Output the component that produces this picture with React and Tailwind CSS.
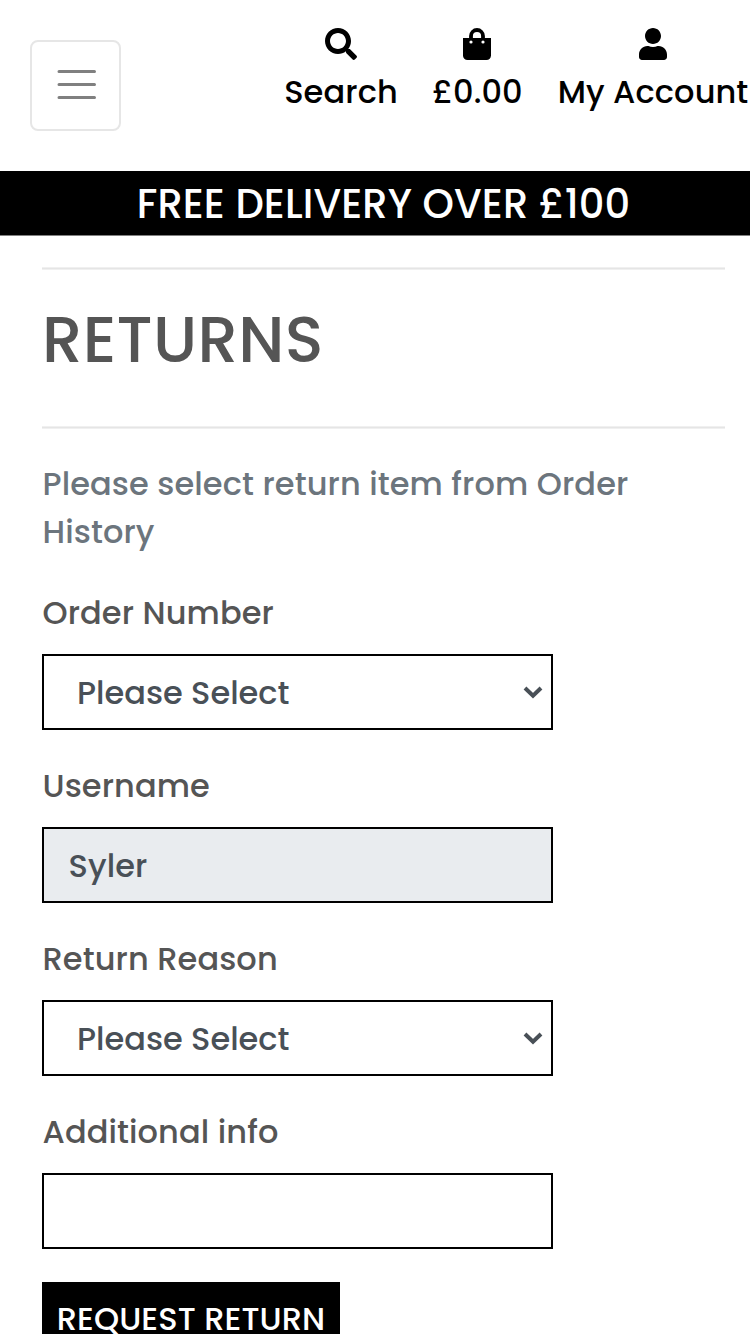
import { FaSearch, FaUser } from "react-icons/fa";

function BagIcon() {
  return (
    <svg className="mr-px h-8 w-7" viewBox="0 0 28 32" aria-hidden="true">
      <path d="M8 11V8a6 6 0 0 1 12 0v3" fill="none" stroke="#000" strokeWidth="3.8" />
      <path d="M0 10h28v17.500a4.500 4.500 0 0 1-4.500 4.500h-19A4.500 4.500 0 0 1 0 27.500z" />
      <circle cx="8" cy="14" r="1.6" fill="#fff" />
      <circle cx="20" cy="14" r="1.6" fill="#fff" />
    </svg>
  );
}

function Chevron() {
  return (
    <svg className="h-[13px] w-5 shrink-0" viewBox="0 0 20 13" fill="none" stroke="#495057" strokeWidth="4" aria-hidden="true">
      <path d="M2 2l8 7.700L18 2" />
    </svg>
  );
}

function NavItem({ icon, label, className }) {
  return (
    <a className={`flex flex-col items-center whitespace-nowrap ${className}`}>
      <span className="flex h-8 items-center">{icon}</span>
      <span className="mt-2 leading-[48px]">{label}</span>
    </a>
  );
}

function Field({ label, children }) {
  return (
    <div className="mb-8 h-[141px]">
      <label className="block h-12 pl-[0.5px] leading-[48px]">{label}</label>
      {children}
    </div>
  );
}

function Select() {
  return (
    <div className="mt-[17px] flex h-[76px] w-[511px] items-center justify-between border-2 border-black pt-px pr-2 pl-[33px] text-[#495057]">
      <span className="tracking-normal">Please Select</span>
      <Chevron />
    </div>
  );
}

function Rule({ className }) {
  return <div className={`h-[3px] border-y border-[#f0f0f0] bg-[#e5e5e5] ${className}`} />;
}

export default function App() {
  return (
    <div className="h-[1334px] w-[750px] overflow-hidden bg-white font-[Poppins,Inter,sans-serif] text-[32px] font-medium tracking-[0.1px] text-[#555]">
      <header className="flex h-[171px] items-start justify-between pl-[30px]">
        <button className="mt-10 flex h-[91px] w-[91px] items-center justify-center rounded-[8px] border-2 border-[#e6e6e6]">
          <svg className="mb-[3px] h-[30px] w-10" viewBox="0 0 40 30" stroke="#808080" strokeWidth="3" strokeLinecap="round" aria-hidden="true">
            <path d="M3 2.500h35.500M3 15.500h35.500M3 28.500h35.500" />
          </svg>
        </button>
        <nav className="flex gap-9 pt-7 pr-[2px] text-black">
          <NavItem className="w-[112px]" icon={<FaSearch size={32} />} label="Search" />
          <NavItem className="w-[89px]" icon={<BagIcon />} label="£0.00" />
          <NavItem className="w-[190px]" icon={<FaUser size={32} className="mr-px" />} label="My Account" />
        </nav>
      </header>
      <div className="flex h-[64px] items-center justify-center bg-black pt-px pl-[17px] text-[40px] whitespace-nowrap text-white">
        FREE DELIVERY OVER £100
      </div>
      <div className="h-px bg-[#808080]" />
      <main className="pr-[25px] pl-[42px]">
        <Rule className="mt-[31px]" />
        <h1 className="mt-[31px] h-[78px] text-[64px] leading-[77px] font-medium tracking-[0.3px]">RETURNS</h1>
        <Rule className="mt-[47px]" />
        <p className="mt-[31px] mb-[33px] h-24 pl-[0.5px] leading-[48px] whitespace-nowrap text-[#6c757d]">
          Please select return item from Order
          <br />
          History
        </p>
        <form>
          <Field label="Order Number">
            <Select />
          </Field>
          <Field label="Username">
            <div className="mt-[17px] flex h-[76px] w-[511px] items-center border-2 border-black bg-[#e9ecef] px-[24.5px] pt-px text-[#495057]">Syler</div>
          </Field>
          <Field label="Return Reason">
            <Select />
          </Field>
          <Field label="Additional info">
            <input className="mt-[17px] block h-[76px] w-[511px] border-2 border-black px-6" />
          </Field>
          <button className="mt-px h-[76px] w-[298px] bg-black pb-[2px] text-center whitespace-nowrap text-white">REQUEST RETURN</button>
        </form>
      </main>
    </div>
  );
}
